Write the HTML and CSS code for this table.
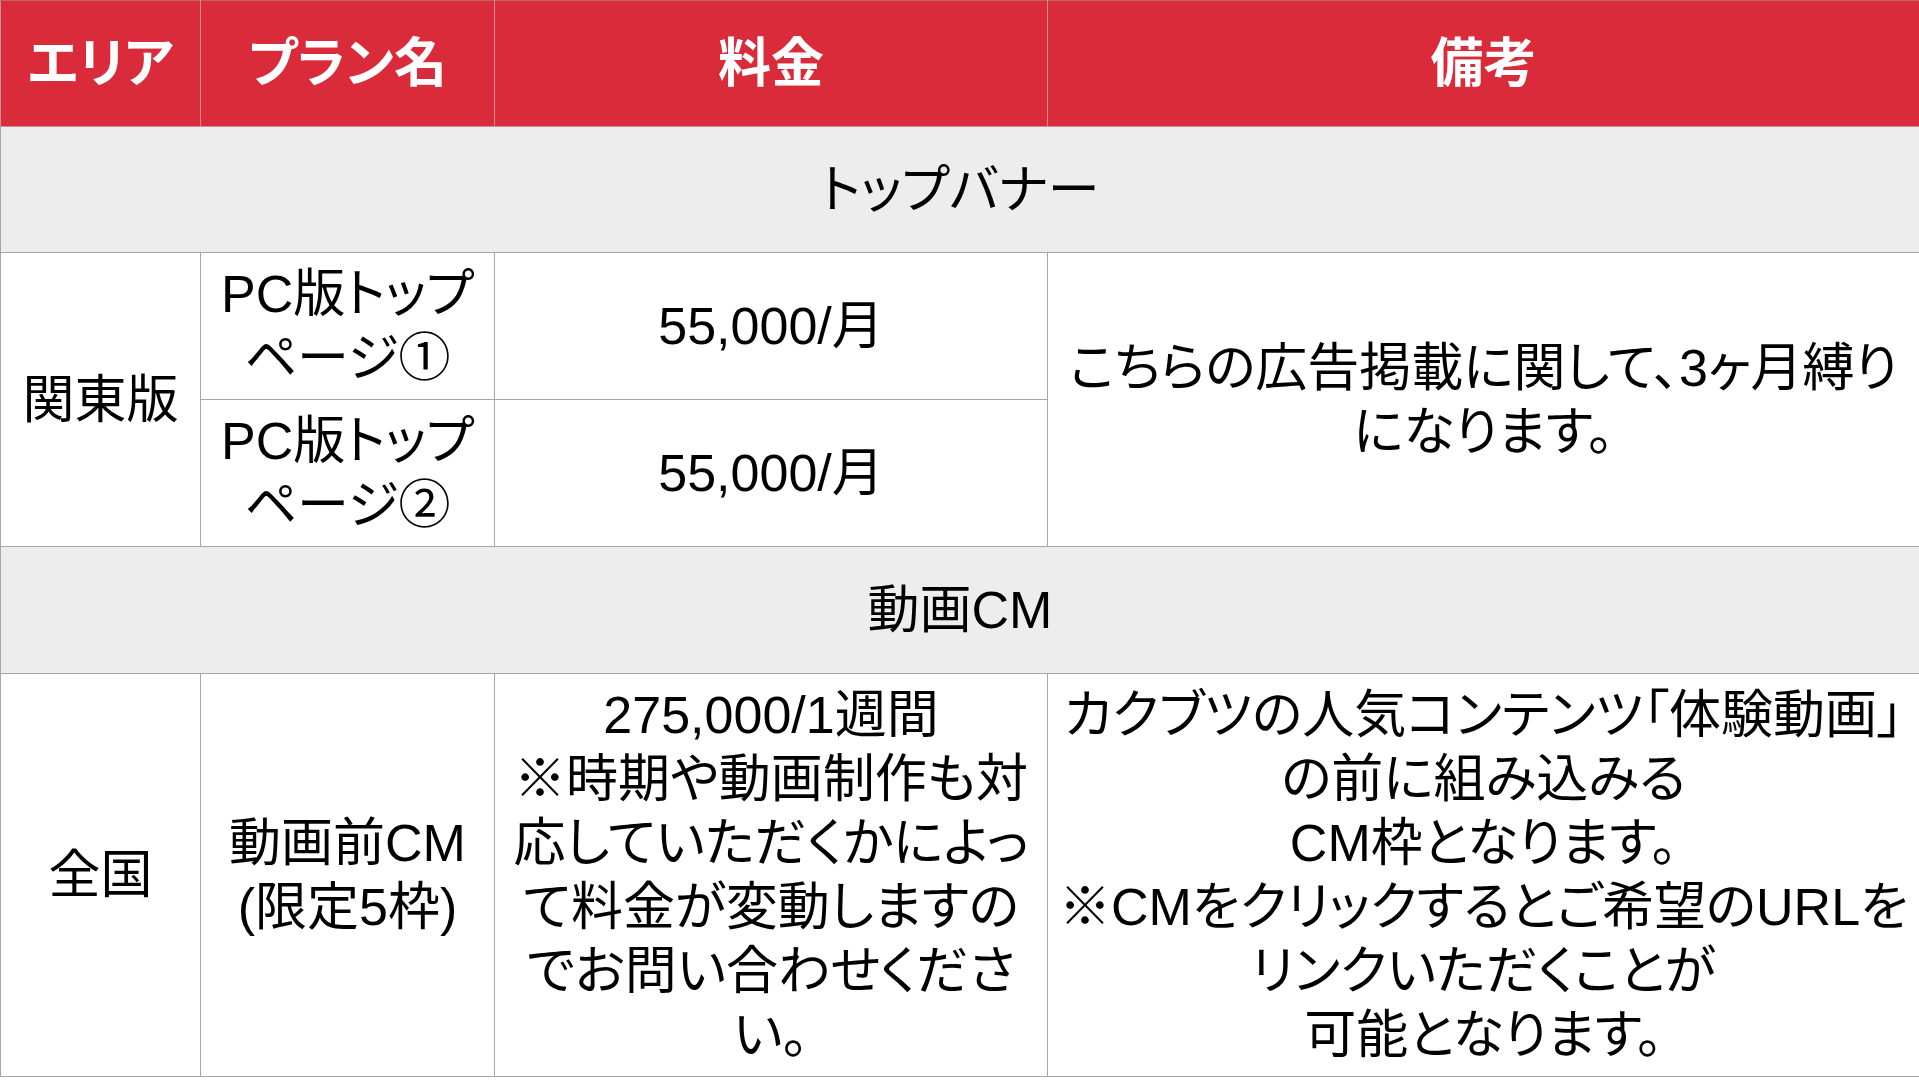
FILE: index.html
```html
<!DOCTYPE html>
<html lang="ja">
<head>
<meta charset="utf-8">
<title>料金表</title>
<link rel="stylesheet" href="styles.css">
</head>
<body>
<table class="price-table">
  <colgroup>
    <col class="c-area">
    <col class="c-plan">
    <col class="c-price">
    <col class="c-note">
  </colgroup>
  <thead>
    <tr class="row-head">
      <th>エリア</th>
      <th>プラン名</th>
      <th>料金</th>
      <th>備考</th>
    </tr>
  </thead>
  <tbody>
    <tr class="row-section">
      <td colspan="4">トップバナー</td>
    </tr>
    <tr class="row-sub">
      <td rowspan="2">関東版</td>
      <td>PC版トップ<br>ページ①</td>
      <td>55,000/月</td>
      <td rowspan="2">こちらの広告掲載に関して、3ヶ月縛り<br>になります。</td>
    </tr>
    <tr class="row-sub">
      <td>PC版トップ<br>ページ②</td>
      <td>55,000/月</td>
    </tr>
    <tr class="row-section row-section2">
      <td colspan="4">動画CM</td>
    </tr>
    <tr class="row-big">
      <td>全国</td>
      <td>動画前CM<br>(限定5枠)</td>
      <td>275,000/1週間<br>※時期や動画制作も対<br>応していただくかによっ<br>て料金が変動しますの<br>でお問い合わせくださ<br>い。</td>
      <td>カクブツの人気コンテンツ「体験動画」<br>の前に組み込みる<br>CM枠となります。<br>※CMをクリックするとご希望のURLを<br>リンクいただくことが<br>可能となります。</td>
    </tr>
  </tbody>
</table>
</body>
</html>
```

FILE: styles.css
```css
html, body {
  margin: 0;
  padding: 0;
  background: #ffffff;
}

body {
  font-family: "Liberation Sans", "Noto Sans CJK JP", sans-serif;
  color: #000000;
}

.price-table {
  width: 1919px;
  table-layout: fixed;
  border-collapse: collapse;
  font-size: 52px;
  line-height: 64px;
  font-feature-settings: "palt";
}

.c-area { width: 200px; }
.c-plan { width: 294px; }
.c-price { width: 553px; }
.c-note { width: 872px; }

.price-table th,
.price-table td {
  border: 1px solid #a6a6a6;
  padding: 0 6px;
  text-align: center;
  vertical-align: middle;
  white-space: nowrap;
  overflow: visible;
}

.row-head { height: 126px; }

.row-head th {
  background: #d92b3a;
  color: #ffffff;
  font-weight: 700;
  font-size: 53px;
  border-color: #c98f94;
  border-top-color: #b9666d;
}

.row-section { height: 126px; }
.row-section2 { height: 127px; }

.row-section td {
  background: #ededed;
}

.row-sub { height: 147px; }

.row-big { height: 403px; }
```
